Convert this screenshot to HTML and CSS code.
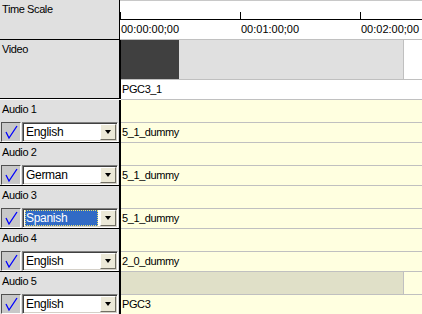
FILE: index.html
```html
<!DOCTYPE html>
<html lang="en">
<head>
  <meta charset="UTF-8">
  <title>Timeline</title>
  <link rel="stylesheet" href="styles.css">
</head>
<body>
  <div class="timeline">
    <div class="row row-scale">
      <div class="head">Time Scale</div>
      <div class="ruler">
        <div class="ticks">
          <span class="minute"></span>
          <span class="minute"></span>
          <span class="minute"></span>
        </div>
        <div class="marks">
          <span class="mark">00:00:00;00</span>
          <span class="mark">00:01:00;00</span>
          <span class="mark">00:02:00;00</span>
        </div>
      </div>
    </div>

    <div class="row row-video">
      <div class="head">Video</div>
      <div class="track">
        <div class="lane lane-video">
          <div class="clip">
            <span class="clip-dark"></span>
            <span class="clip-light"></span>
          </div>
        </div>
        <div class="clip-name">PGC3_1</div>
      </div>
    </div>

    <div class="row row-audio">
      <div class="head head-audio">
        <div class="label">Audio 1</div>
        <div class="controls">
          <span class="check"><svg width="16" height="16" viewBox="0 0 16 16"><path d="M3 8 L6 14 L14 2" fill="none" stroke="#0000ff" stroke-width="1.3"/></svg></span>
          <div class="combo"><span class="value">English</span><span class="drop"></span></div>
        </div>
      </div>
      <div class="track">
        <div class="lane"></div>
        <div class="clip-name">5_1_dummy</div>
      </div>
    </div>

    <div class="row row-audio">
      <div class="head head-audio">
        <div class="label">Audio 2</div>
        <div class="controls">
          <span class="check"><svg width="16" height="16" viewBox="0 0 16 16"><path d="M3 8 L6 14 L14 2" fill="none" stroke="#0000ff" stroke-width="1.3"/></svg></span>
          <div class="combo"><span class="value">German</span><span class="drop"></span></div>
        </div>
      </div>
      <div class="track">
        <div class="lane"></div>
        <div class="clip-name">5_1_dummy</div>
      </div>
    </div>

    <div class="row row-audio">
      <div class="head head-audio">
        <div class="label">Audio 3</div>
        <div class="controls">
          <span class="check"><svg width="16" height="16" viewBox="0 0 16 16"><path d="M3 8 L6 14 L14 2" fill="none" stroke="#0000ff" stroke-width="1.3"/></svg></span>
          <div class="combo"><span class="value selected">Spanish</span><span class="drop"></span></div>
        </div>
      </div>
      <div class="track">
        <div class="lane"></div>
        <div class="clip-name">5_1_dummy</div>
      </div>
    </div>

    <div class="row row-audio">
      <div class="head head-audio">
        <div class="label">Audio 4</div>
        <div class="controls">
          <span class="check"><svg width="16" height="16" viewBox="0 0 16 16"><path d="M3 8 L6 14 L14 2" fill="none" stroke="#0000ff" stroke-width="1.3"/></svg></span>
          <div class="combo"><span class="value">English</span><span class="drop"></span></div>
        </div>
      </div>
      <div class="track">
        <div class="lane"></div>
        <div class="clip-name">2_0_dummy</div>
      </div>
    </div>

    <div class="row row-audio">
      <div class="head head-audio">
        <div class="label">Audio 5</div>
        <div class="controls">
          <span class="check"><svg width="16" height="16" viewBox="0 0 16 16"><path d="M3 8 L6 14 L14 2" fill="none" stroke="#0000ff" stroke-width="1.3"/></svg></span>
          <div class="combo"><span class="value">English</span><span class="drop"></span></div>
        </div>
      </div>
      <div class="track">
        <div class="lane"><span class="clip-beige"></span></div>
        <div class="clip-name">PGC3</div>
      </div>
    </div>
  </div>
</body>
</html>
```

FILE: styles.css
```css
body {
  margin: 0;
  font-family: "Liberation Sans", Arial, sans-serif;
  font-size: 11px;
  color: #000;
  background: #fff;
}
.timeline {
  width: 422px;
  height: 314px;
  overflow: hidden;
}
.row {
  display: flex;
}
.head {
  width: 121px;
  flex-shrink: 0;
  background: #e0e0e0;
  border-right: 2px solid #000;
  border-bottom: 1px solid #000;
  padding: 3px 0 0 2px;
  box-sizing: border-box;
  letter-spacing: -0.4px;
  line-height: 13px;
}
.track {
  flex: 1;
  min-width: 0;
  border-bottom: 1px solid #c0c0c0;
  display: flex;
  flex-direction: column;
}

/* time scale */
.row-scale .head {
  height: 40px;
}
.ruler {
  flex: 1;
  background: #fff;
  border-top: 1px solid #c8c8c8;
  border-bottom: 1px solid #c0c0c0;
  margin-left: -1px;
  overflow: hidden;
}
.ticks {
  display: flex;
  height: 19px;
  border-bottom: 1px solid #000;
  box-sizing: border-box;
  align-items: flex-end;
}
.minute {
  width: 120px;
  flex-shrink: 0;
  height: 7px;
  border-left: 1px solid #000;
  box-sizing: border-box;
}
.marks {
  display: flex;
  padding: 3px 0 0 1px;
  line-height: 13px;
}
.mark {
  width: 120px;
  flex-shrink: 0;
  white-space: nowrap;
}

/* video */
.row-video .head {
  height: 59px;
}
.row-video .track {
  background: #fff;
}
.lane {
  height: 22px;
  border-bottom: 1px solid #c0c0c0;
  display: flex;
}
.lane-video {
  height: 39px;
}
.clip {
  display: flex;
}
.clip-dark {
  width: 58px;
  background: #404040;
}
.clip-light {
  width: 224px;
  background: #e0e0e0;
  border-right: 1px solid #c0c0c0;
}
.clip-name {
  height: 19px;
  line-height: 19px;
  padding-left: 1px;
  letter-spacing: -0.4px;
  white-space: nowrap;
}

/* audio */
.head-audio {
  height: 43px;
  display: flex;
  flex-direction: column;
  padding: 0;
}
.label {
  height: 22px;
  padding: 3px 0 0 2px;
  box-sizing: border-box;
}
.controls {
  display: flex;
  gap: 1px;
  padding-left: 1px;
  height: 20px;
}
.row-audio .track {
  background: #ffffe0;
}
.check {
  width: 20px;
  height: 20px;
  box-sizing: border-box;
  background: #c8c8c8;
  border: 1px solid;
  border-color: #505050 #fff #fff #505050;
  display: flex;
  align-items: center;
  justify-content: center;
}
.combo {
  width: 96px;
  height: 20px;
  box-sizing: border-box;
  background: #fff;
  border: 1px solid;
  border-color: #808080 #fff #fff #808080;
  box-shadow: inset 1px 1px 0 #404040, inset -1px -1px 0 #d4d0c8;
  display: flex;
  align-items: center;
  padding: 1px 1px 1px 2px;
}
.value {
  flex: 1;
  height: 16px;
  line-height: 16px;
  padding-left: 1px;
  letter-spacing: -0.3px;
  font-size: 12px;
}
.value.selected {
  background: #316ac5;
  color: #fff;
  outline: 1px dotted #e8e070;
  outline-offset: -1px;
  margin-right: 2px;
}
.drop {
  width: 16px;
  height: 16px;
  box-sizing: border-box;
  background: #ece9d8;
  border: 1px solid;
  border-color: #fff #716f64 #716f64 #fff;
  display: flex;
  align-items: center;
  justify-content: center;
}
.drop::after {
  content: "";
  border-left: 3.5px solid transparent;
  border-right: 3.5px solid transparent;
  border-top: 4px solid #000;
}
.clip-beige {
  width: 282px;
  background: #e0e0c8;
  border-right: 1px solid #c0c0c0;
}
```
